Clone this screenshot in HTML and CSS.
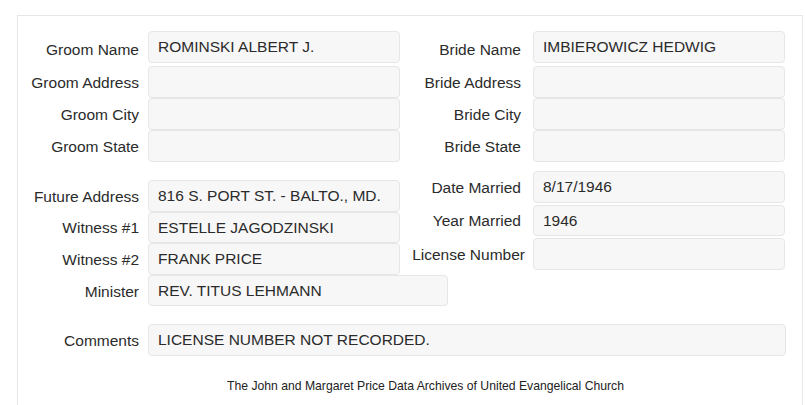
FILE: index.html
```html
<!DOCTYPE html>
<html>
<head>
<meta charset="utf-8">
<link rel="stylesheet" href="styles.css">
</head>
<body>
<div class="panel">
  <div class="cols">
    <div class="col col-left">
      <div class="grid g-top">
        <div class="lbl">Groom Name</div><div class="fld">ROMINSKI ALBERT J.</div>
        <div class="lbl">Groom Address</div><div class="fld"></div>
        <div class="lbl">Groom City</div><div class="fld"></div>
        <div class="lbl">Groom State</div><div class="fld"></div>
      </div>
      <div class="grid g-left2">
        <div class="lbl">Future Address</div><div class="fld">816 S. PORT ST. - BALTO., MD.</div>
        <div class="lbl">Witness #1</div><div class="fld">ESTELLE JAGODZINSKI</div>
        <div class="lbl">Witness #2</div><div class="fld">FRANK PRICE</div>
        <div class="lbl">Minister</div><div class="fld fld-wide">REV. TITUS LEHMANN</div>
      </div>
    </div>
    <div class="col col-right">
      <div class="grid g-top">
        <div class="lbl">Bride Name</div><div class="fld">IMBIEROWICZ HEDWIG</div>
        <div class="lbl">Bride Address</div><div class="fld"></div>
        <div class="lbl">Bride City</div><div class="fld"></div>
        <div class="lbl">Bride State</div><div class="fld"></div>
      </div>
      <div class="grid g-right2">
        <div class="lbl">Date Married</div><div class="fld">8/17/1946</div>
        <div class="lbl">Year Married</div><div class="fld">1946</div>
        <div class="lbl lbl-long">License Number</div><div class="fld"></div>
      </div>
    </div>
  </div>
  <div class="grid g-comments">
    <div class="lbl">Comments</div><div class="fld">LICENSE NUMBER NOT RECORDED.</div>
  </div>
  <div class="footer">The John and Margaret Price Data Archives of United Evangelical Church</div>
</div>
</body>
</html>
```

FILE: styles.css
```css
html, body {
  margin: 0;
  padding: 0;
  background: #ffffff;
}
body {
  font-family: "Liberation Sans", Arial, sans-serif;
  color: #2b2b2b;
  overflow: hidden;
}
.panel {
  margin: 15px 2px 0 17px;
  border: 1px solid #e6e6e6;
  border-bottom: none;
  min-height: 420px;
  padding: 15px 18px 0 0;
}
.cols {
  display: flex;
}
.col-left {
  width: 382px;
}
.col-right {
  width: 385px;
}
.grid {
  display: grid;
  grid-template-columns: 121px 252px;
  column-gap: 9px;
}
.col-right .grid {
  column-gap: 12px;
}
.lbl {
  font-size: 15.5px;
  text-align: right;
  white-space: nowrap;
  align-self: center;
  padding-top: 2px;
}
.lbl-long {
  margin-right: -4px;
}
.fld {
  box-sizing: border-box;
  height: 31.5px;
  background: #f7f7f7;
  border: 1px solid #e6e6e6;
  border-radius: 4px;
  padding: 0 9px;
  font-size: 15.5px;
  line-height: 29px;
  color: #2b2b2b;
  white-space: nowrap;
}
.g-top .fld:nth-child(2) {
  margin-bottom: 3.5px;
}
.g-top .fld {
  margin-bottom: 0.5px;
}
.g-left2 {
  margin-top: 18px;
}
.g-left2 .fld {
  height: 31.6px;
}
.fld-wide {
  width: 300px;
}
.g-right2 {
  margin-top: 9px;
  row-gap: 2px;
}
.g-comments {
  margin-top: 18px;
  grid-template-columns: 121px 638px;
}
.footer {
  margin-top: 23px;
  padding-left: 49px;
  text-align: center;
  font-size: 12.2px;
  line-height: 14px;
  color: #222222;
}
```
